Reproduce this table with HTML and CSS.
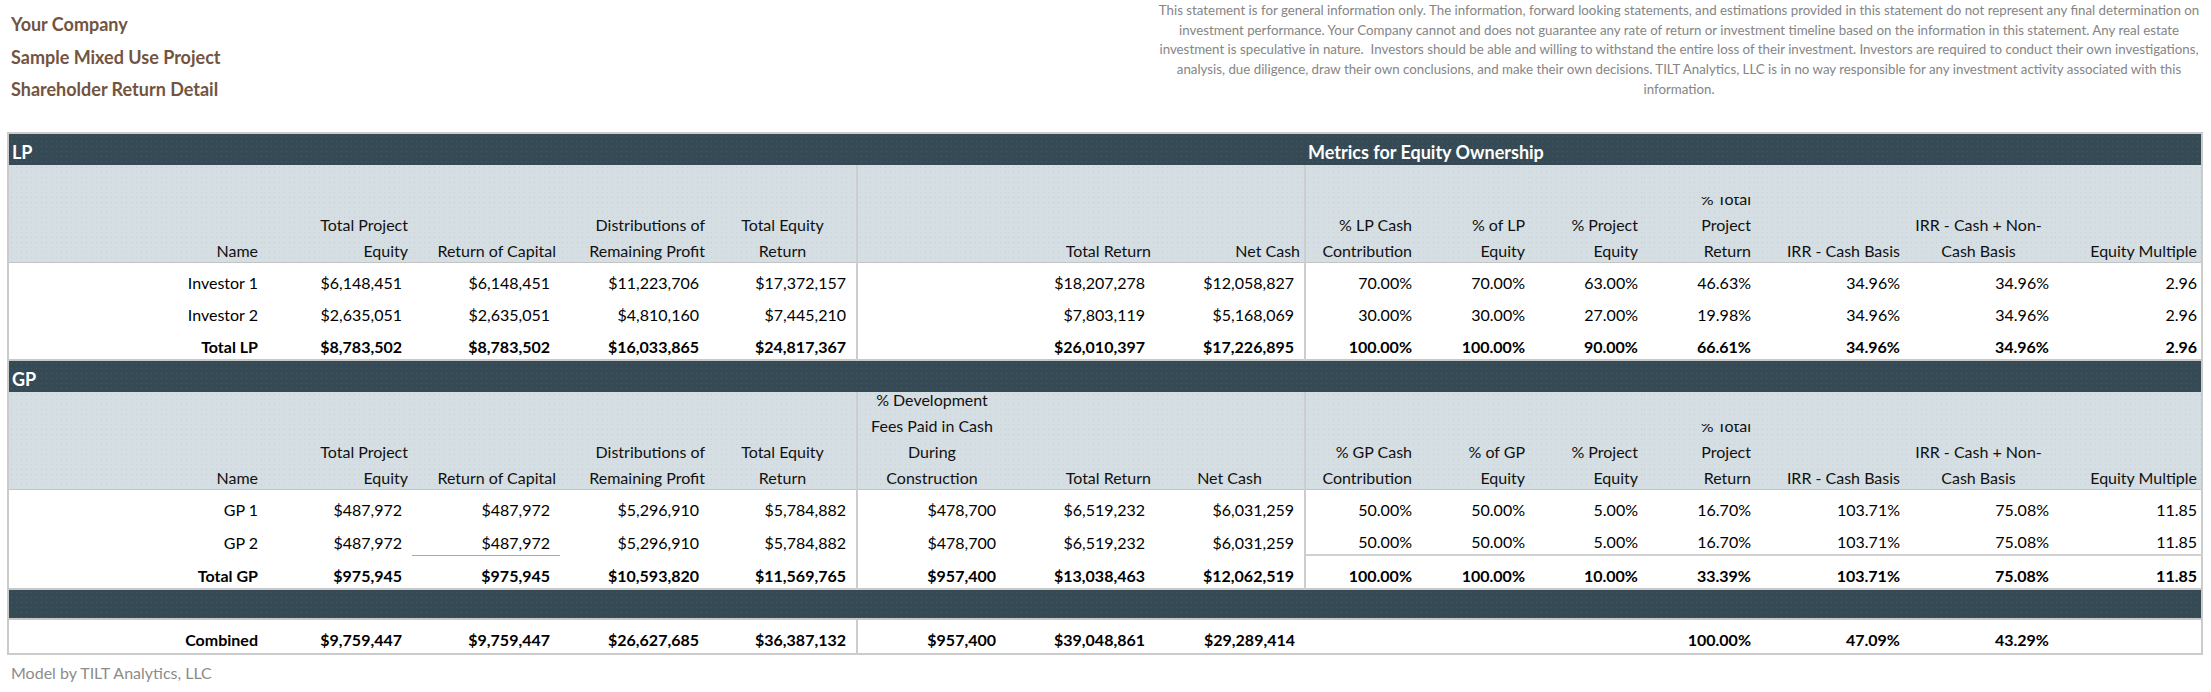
FILE: index.html
```html
<!DOCTYPE html>
<html lang="en">
<head>
<meta charset="utf-8">
<title>Shareholder Return Detail</title>
<link rel="stylesheet" href="styles.css">
</head>
<body>
<div class="top">
  <div class="titles">
    <div class="title">Your Company</div>
    <div class="title">Sample Mixed Use Project</div>
    <div class="title">Shareholder Return Detail</div>
  </div>
  <div class="disclaimer">
    This statement is for general information only. The information, forward looking statements, and estimations provided in this statement do not represent any final determination on<br>
    investment performance. Your Company cannot and does not guarantee any rate of return or investment timeline based on the information in this statement. Any real estate<br>
    investment is speculative in nature.&nbsp; Investors should be able and willing to withstand the entire loss of their investment. Investors are required to conduct their own investigations,<br>
    analysis, due diligence, draw their own conclusions, and make their own decisions. TILT Analytics, LLC is in no way responsible for any investment activity associated with this<br>
    information.
  </div>
</div>

<table class="sheet">
  <colgroup>
    <col class="c1"><col class="c2"><col class="c3"><col class="c4"><col class="c5">
    <col class="c6"><col class="c7"><col class="c8">
    <col class="c9"><col class="c10"><col class="c11"><col class="c12"><col class="c13"><col class="c14"><col class="c15">
  </colgroup>
  <tbody>
    <tr class="bar">
      <td colspan="8" class="bar-label">LP</td>
      <td colspan="7" class="bar-label">Metrics for Equity Ownership</td>
    </tr>
    <tr class="head">
      <th><div class="hb">Name</div></th>
      <th><div class="hb">Total Project<br>Equity</div></th>
      <th><div class="hb">Return of Capital</div></th>
      <th><div class="hb">Distributions of<br>Remaining Profit</div></th>
      <th class="sep ctr"><div class="hb">Total Equity<br>Return</div></th>
      <th><div class="hb"></div></th>
      <th><div class="hb">Total Return</div></th>
      <th class="sep"><div class="hb">Net Cash</div></th>
      <th><div class="hb">% LP Cash<br>Contribution</div></th>
      <th><div class="hb">% of LP<br>Equity</div></th>
      <th><div class="hb">% Project<br>Equity</div></th>
      <th><div class="hb clip">% Total<br>Project<br>Return</div></th>
      <th><div class="hb">IRR - Cash Basis</div></th>
      <th class="ctr"><div class="hb">IRR - Cash + Non-<br>Cash Basis</div></th>
      <th><div class="hb">Equity Multiple</div></th>
    </tr>
    <tr class="row first">
      <td>Investor 1</td>
      <td class="m">$6,148,451</td><td class="m">$6,148,451</td><td class="m">$11,223,706</td><td class="m sep">$17,372,157</td>
      <td class="m"></td><td class="m">$18,207,278</td><td class="m sep">$12,058,827</td>
      <td>70.00%</td><td>70.00%</td><td>63.00%</td><td>46.63%</td><td>34.96%</td><td>34.96%</td><td>2.96</td>
    </tr>
    <tr class="row">
      <td>Investor 2</td>
      <td class="m">$2,635,051</td><td class="m">$2,635,051</td><td class="m">$4,810,160</td><td class="m sep">$7,445,210</td>
      <td class="m"></td><td class="m">$7,803,119</td><td class="m sep">$5,168,069</td>
      <td>30.00%</td><td>30.00%</td><td>27.00%</td><td>19.98%</td><td>34.96%</td><td>34.96%</td><td>2.96</td>
    </tr>
    <tr class="row total">
      <td>Total LP</td>
      <td class="m">$8,783,502</td><td class="m">$8,783,502</td><td class="m">$16,033,865</td><td class="m sep">$24,817,367</td>
      <td class="m"></td><td class="m">$26,010,397</td><td class="m sep">$17,226,895</td>
      <td>100.00%</td><td>100.00%</td><td>90.00%</td><td>66.61%</td><td>34.96%</td><td>34.96%</td><td>2.96</td>
    </tr>

    <tr class="bar ruled">
      <td colspan="15" class="bar-label">GP</td>
    </tr>
    <tr class="head">
      <th><div class="hb">Name</div></th>
      <th><div class="hb">Total Project<br>Equity</div></th>
      <th><div class="hb">Return of Capital</div></th>
      <th><div class="hb">Distributions of<br>Remaining Profit</div></th>
      <th class="sep ctr"><div class="hb">Total Equity<br>Return</div></th>
      <th class="ctr"><div class="hb">% Development<br>Fees Paid in Cash<br>During<br>Construction</div></th>
      <th><div class="hb">Total Return</div></th>
      <th class="sep ctr"><div class="hb">Net Cash</div></th>
      <th><div class="hb">% GP Cash<br>Contribution</div></th>
      <th><div class="hb">% of GP<br>Equity</div></th>
      <th><div class="hb">% Project<br>Equity</div></th>
      <th><div class="hb clip">% Total<br>Project<br>Return</div></th>
      <th><div class="hb">IRR - Cash Basis</div></th>
      <th class="ctr"><div class="hb">IRR - Cash + Non-<br>Cash Basis</div></th>
      <th><div class="hb">Equity Multiple</div></th>
    </tr>
    <tr class="row first">
      <td>GP 1</td>
      <td class="m">$487,972</td><td class="m">$487,972</td><td class="m">$5,296,910</td><td class="m sep">$5,784,882</td>
      <td class="m">$478,700</td><td class="m">$6,519,232</td><td class="m sep">$6,031,259</td>
      <td>50.00%</td><td>50.00%</td><td>5.00%</td><td>16.70%</td><td>103.71%</td><td>75.08%</td><td>11.85</td>
    </tr>
    <tr class="row">
      <td>GP 2</td>
      <td class="m">$487,972</td><td class="m thin-under">$487,972</td><td class="m">$5,296,910</td><td class="m sep">$5,784,882</td>
      <td class="m">$478,700</td><td class="m">$6,519,232</td><td class="m sep">$6,031,259</td>
      <td class="under">50.00%</td><td class="under">50.00%</td><td class="under">5.00%</td><td class="under">16.70%</td><td class="under">103.71%</td><td class="under">75.08%</td><td class="under">11.85</td>
    </tr>
    <tr class="row total">
      <td>Total GP</td>
      <td class="m">$975,945</td><td class="m">$975,945</td><td class="m">$10,593,820</td><td class="m sep">$11,569,765</td>
      <td class="m">$957,400</td><td class="m">$13,038,463</td><td class="m sep">$12,062,519</td>
      <td>100.00%</td><td>100.00%</td><td>10.00%</td><td>33.39%</td><td>103.71%</td><td>75.08%</td><td>11.85</td>
    </tr>

    <tr class="bar ruled closing">
      <td colspan="15" class="bar-label"></td>
    </tr>
    <tr class="row total combined">
      <td>Combined</td>
      <td class="m">$9,759,447</td><td class="m">$9,759,447</td><td class="m">$26,627,685</td><td class="m sep">$36,387,132</td>
      <td class="m">$957,400</td><td class="m">$39,048,861</td><td class="m">$29,289,414</td>
      <td></td><td></td><td></td><td>100.00%</td><td>47.09%</td><td>43.29%</td><td></td>
    </tr>
  </tbody>
</table>

<div class="footer">Model by TILT Analytics, LLC</div>
</body>
</html>
```

FILE: styles.css
```css
html, body {
  margin: 0;
  padding: 0;
  background: #ffffff;
}

body {
  font-family: Lato, "Liberation Sans", sans-serif;
  color: #000;
  width: 2211px;
}

.top {
  display: flex;
  justify-content: space-between;
  height: 132px;
}

.titles {
  padding: 8px 0 0 11px;
}

.title {
  font-weight: 700;
  font-size: 18px;
  line-height: 32.5px;
  color: #72543f;
}

.disclaimer {
  width: 1060px;
  margin-right: 2px;
  padding-top: 1px;
  text-align: center;
  white-space: nowrap;
  font-size: 13.3px;
  line-height: 19.7px;
  color: #858585;
}

.sheet {
  margin-left: 7px;
  width: 2196px;
  table-layout: fixed;
  border-collapse: collapse;
  border: 2px solid #cbcbcb;
  font-size: 16px;
}

.c1 { width: 254px; }
.c2 { width: 150px; }
.c3 { width: 148px; }
.c4 { width: 149px; }
.c5 { width: 148px; }
.c6 { width: 149px; }
.c7 { width: 149px; }
.c8 { width: 150px; }
.c9 { width: 111px; }
.c10 { width: 113px; }
.c11 { width: 113px; }
.c12 { width: 113px; }
.c13 { width: 149px; }
.c14 { width: 149px; }
.c15 { width: 149px; }

.sheet td,
.sheet th {
  padding: 0 4px;
  text-align: right;
  white-space: nowrap;
}

/* dark section bars */
.bar td {
  height: 28px;
  padding: 0 3px 3px;
  vertical-align: bottom;
  text-align: left;
  background-color: #354a54;
  background-image: radial-gradient(circle, rgba(255, 255, 255, 0.09) 0.7px, transparent 1px);
  background-size: 5px 5px;
  color: #fff;
  font-weight: 700;
  font-size: 18px;
  line-height: 20px;
}

.bar.ruled td {
  border-top: 2px solid #c8c8c8;
}

.bar.closing td {
  height: 25px;
  border-bottom: 2px solid #c8c8c8;
}

/* column headers */
.head th {
  height: 97px;
  padding-top: 0;
  padding-bottom: 0;
  vertical-align: bottom;
  font-weight: 400;
  color: #111;
  background-color: #d5dee2;
  background-image: radial-gradient(circle, rgba(120, 140, 150, 0.16) 0.7px, transparent 1px);
  background-size: 5px 5px;
  border-bottom: 1px solid #c4c4c4;
  line-height: 26px;
}

.head th.ctr {
  text-align: center;
}

.hb {
  height: 68px;
  display: flex;
  flex-direction: column;
  justify-content: flex-end;
  overflow: visible;
  position: relative;
  top: 2px;
}

.hb.clip {
  overflow: hidden;
  height: 67px;
}

.sep {
  border-right: 2px solid #cdcdcd;
}

/* data rows */
.row td {
  height: 29px;
  padding-top: 0;
  padding-bottom: 3px;
  vertical-align: bottom;
  line-height: 19px;
}

.row td.m {
  padding-right: 10px;
}

.row.total td {
  font-weight: 700;
}

.row.combined td {
  height: 29px;
  padding-bottom: 4px;
}

.thin-under {
  border-bottom: 1px solid #a8a8a8;
}

.under {
  border-bottom: 2px solid #d0d0d0;
}

.footer {
  padding: 8px 0 0 11px;
  font-size: 16px;
  line-height: 20px;
  color: #8c8c8c;
}
```
